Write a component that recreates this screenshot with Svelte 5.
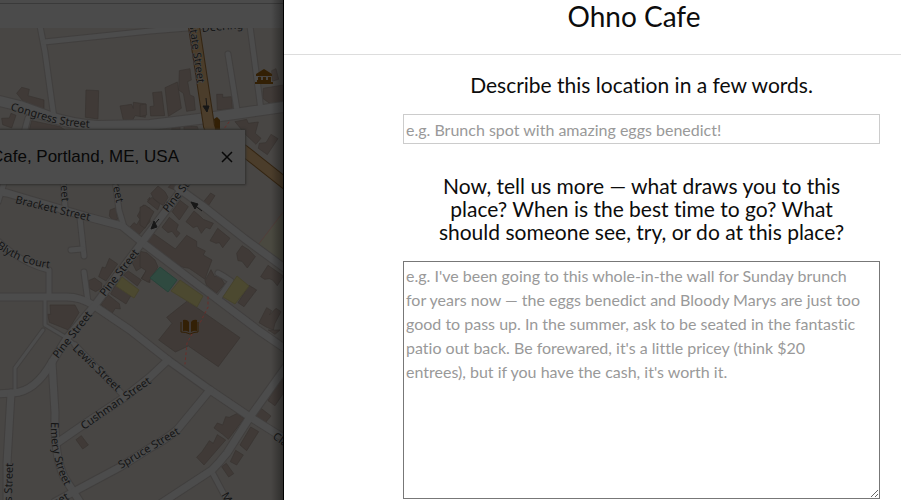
<script>
  let summary = $state('');
  let details = $state('');

  const land = [
    'M40 26L45 52L54 118', 'M44 42L150 31L200 27',
    'M228 54L237 110', 'M250 26L261 110',
    'M63 180L65 207', 'M115 180L119 210L124 227',
    'M80 218L84 256', 'M71 250L82 249', 'M84 272L88 302',
    'M-3 240Q22 264 49 270V297', 'M5 180L-2 202',
    'M75 345L123 395', 'M212 472L228 502',
    'M218 273Q224 276 231 281L218 299', 'M24 133L28 118'
  ];
  const lanes = ['M45 297V325L67 338L75 345', 'M43 330L15 368V393'];
  const streets = [
    'M-5 191L7 193L88 217L122 226L143 243L193 281L258 330L290 352',
    'M-5 297H67Q80 297 93 305L130 330L168 360L210 390L250 417L290 442',
    'M186 184L140 245L95 305L67 338L52 362Q35 392 13 393L-5 394',
    'M178 188L203 206L245 239L290 272',
    'M52 362L55 413Q54 455 64 477L80 502',
    'M11 393L7 463V502',
    'M57 443L83 425L125 397L150 377L168 360',
    'M55 502L77 490L120 467L150 448Q165 440 177 430L210 390',
    'M160 504L212 470Q219 463 227 453L250 417L288 364'
  ];
  const congress = 'M-5 100L20 106L50 117Q72 124 97 126L150 125L207 118L290 106';
  const stateStreet = 'M193 20L209 126Q211 133 222 137L243 150L290 187';

  // Building footprints, grouped by map tile; each tile is drawn at three units per pixel.
  const tiles = [
    { x: 0, y: 0, d: 'M50 280L65 262L88 268L84 287L132 300V332L72 307ZM258 270L296 272L294 357L256 352ZM360 318L395 313L400 325V307L438 312L436 352L405 347L398 360H370ZM5 355L28 354L33 340L48 346L35 384L8 374ZM95 362L180 380L195 390H88Z' },
    { x: 140, y: 0, d: 'M0 315L18 312L20 345L0 350ZM38 278L65 275L74 347L32 348L30 320L42 318ZM75 263L112 246L124 325L85 349ZM118 212L150 206L154 240L143 245L150 285L162 290L166 330L140 334L130 280L116 270ZM230 283H248V292L275 290L277 326L232 330ZM395 212L408 206L416 238L398 243ZM370 265L430 255V308L400 318L368 295ZM285 365L320 358L325 370L355 366L346 400L363 415L348 433L318 405ZM358 430L378 428L393 403L414 416L382 464L355 445ZM95 385L120 380V389H95ZM132 378L172 380L175 389H132Z' },
    { x: 0, y: 160, d: 'M330 150L348 143L353 178L338 180L328 168ZM385 207L402 188L410 194L420 178L412 168L430 135L450 145V185L417 224ZM443 119L450 112V130ZM150 435H225L237 458L205 510L148 487L143 463H152ZM265 362L284 354L306 370L304 385L287 395L268 385ZM296 350L307 321L316 324L328 295L353 312L318 363ZM370 345L385 333L424 360L412 378ZM348 372L392 408L378 432L332 402ZM325 405L358 431L361 447L346 445L337 459L302 434ZM395 305L425 280L447 293L450 305L409 333ZM424 355L450 315V368Z' },
    { x: 140, y: 160, d: 'M0 142L15 135L42 155L15 205L0 195ZM22 125L36 112L60 132L53 150ZM33 100L54 78L75 95L84 112L70 137L42 118ZM85 82L95 70H120L110 92ZM96 155L120 121L145 140L118 180ZM187 130L212 99L225 107L204 139ZM138 185L162 153L183 171L190 178L220 190L210 207L198 202L184 220L172 198L160 203ZM210 242L233 205L270 235L248 263L238 248L228 250ZM66 202L88 172L115 194L109 210L120 220L110 232L96 214L84 218ZM22 240L42 222L106 267L140 226L170 244V260L196 273L190 285L216 300L205 329L195 358L165 337L147 325L125 321L24 255ZM195 362L213 329L224 350L237 345L254 372L230 399L200 377ZM290 280L306 257L327 270L346 290L322 324L306 304L294 302ZM362 350L384 316L430 348L412 377L398 360L388 356L374 358ZM0 274L20 278L45 300L54 321L25 367L5 356L18 332L0 320ZM327 376L350 390L312 440L294 428ZM357 488L380 443L395 452L388 465L408 445L423 455L405 490L400 510L380 502ZM80 472L110 448L142 423L300 533L235 620L145 558L115 572L106 576L56 540L96 490Z' },
    { x: 0, y: 330, d: 'M228 329L244 317L265 345L248 357Z' },
    { x: 140, y: 330, d: 'M385 0H420L405 13ZM384 212L401 180L412 140L430 150V190L405 227ZM345 258L363 235L393 258L376 278ZM300 345L332 291L356 305L320 362ZM271 395L287 361L310 375L290 405ZM245 410L259 400L281 431L266 441ZM222 294L232 279L248 285L257 260L268 262L292 250L312 266L265 328L248 313ZM170 382L186 365L208 332L220 340L232 314L257 330L192 405Z' }
  ];
</script>

<main>
  <section class="map-pane" aria-label="Map">
    <header></header>
    <div class="map">
      <svg width="284" height="472" viewBox="0 28 284 472" aria-hidden="true">
        <defs>
          <path id="congress" d="M10 110Q30 116 47 121Q67 127 94 128" />
          <path id="brackett" d="M15 203Q45 211 94 222" />
          <path id="blyth" d="M-4 247Q19 265 54 269" />
          <path id="emery" d="M51 422Q49 459 69 494" />
        </defs>
        <path fill="#4a4940" stroke="#513f3b" d="M284 211L258 245L284 263Z" />
        <g fill="#403a37" stroke="#383431" stroke-width="2">
          {#each tiles as tile}
            <path transform="translate({tile.x} {tile.y}) scale(.3333)" d={tile.d} />
          {/each}
        </g>
        <g fill="none" stroke-linecap="round" stroke-linejoin="round">
          <g stroke="#413f3e">
            {#each lanes as d}<path {d} stroke-width="5" />{/each}
            {#each land as d}<path {d} stroke-width="7" />{/each}
            {#each streets as d}<path {d} stroke-width="9" />{/each}
            <path d={congress} stroke-width="12" />
          </g>
          <g stroke="#4c4c4c">
            {#each lanes as d}<path {d} stroke-width="3" />{/each}
            {#each land as d}<path {d} stroke-width="5" />{/each}
            {#each streets as d}<path {d} stroke-width="7" />{/each}
            <path d={congress} stroke-width="10" />
          </g>
          <path d={stateStreet} stroke="#342512" stroke-width="12" />
          <path d={stateStreet} stroke="#4b3d2b" stroke-width="10" />
          <path d="M208 297V307L199 325M192 334L187 343L185 364M229 122L221 133" stroke="#692f2b" stroke-dasharray="2 3" />
        </g>
        <path fill="#2f4a40" stroke="#28433a" d="M160 267L177 280L168 292L150 278Z" />
        <path fill="#4c4930" stroke="#46432d" d="M180 280L203 296L197 307L171 291ZM237 276L249 286L235 304L223 297ZM122 277L139 290L134 298L116 286Z" />

        <g fill="#332005">
          <path d="M256 74L264 69L272 74V76H256ZM258 77H261V81H258ZM263 77H266V81H263ZM268 77H271V81H268ZM257 80H271V82H257ZM255 82H273V84H255Z" />
          <path d="M214 119L217 117L220 120V130H215Z" />
          <path d="M183 320Q187 319 189 322V332Q186 330 183 331ZM191 322Q193 319 197 320V331Q194 330 191 332Z" />
          <path fill="none" stroke="#332005" d="M181 322V332Q186 332 190 334Q194 332 198 332V322" />
        </g>
        <g fill="#171717" stroke="#171717">
          <path d="M206 98L207 108M203 106L207 112L209 106ZM159 219L152 227M154 221L151 229L157 227ZM202 211L194 205M191 202L195 209L198 204Z" />
        </g>

        <g class="labels">
          <text><textPath href="#congress">Congress Street</textPath></text>
          <text><textPath href="#brackett">Brackett Street</textPath></text>
          <text><textPath href="#blyth">Blyth Court</textPath></text>
          <text><textPath href="#emery">Emery Street</textPath></text>
          <text transform="translate(202 32) rotate(-5)">Deering</text>
          <text transform="translate(189 24) rotate(82)">State Street</text>
          <text transform="translate(60 171) rotate(87)">Street</text>
          <text transform="translate(110 173) rotate(78)">Street</text>
          <text transform="translate(168 213) rotate(-52)">Pine Street</text>
          <text transform="translate(105 297) rotate(-52)">Pine Street</text>
          <text transform="translate(58 359) rotate(-52)">Pine Street</text>
          <text transform="translate(72 349) rotate(44)">Lewis Street</text>
          <text transform="translate(84 430) rotate(-35)">Cushman Street</text>
          <text transform="translate(121 469) rotate(-31)">Spruce Street</text>
          <text transform="translate(11 525) rotate(-88)">Lewis Street</text>
          <text transform="translate(43 514) rotate(-30)">Street</text>
          <text transform="translate(272 438) rotate(35)">Clark</text>
          <text transform="translate(221 495) rotate(60)">May</text>
        </g>
      </svg>
    </div>
    <div class="place">
      <span>Ohno Cafe, Portland, ME, USA</span>
      <button type="button" aria-label="Clear location">
        <svg width="12" height="12" viewBox="0 0 12 12"><path d="M1 1L11 11M11 1L1 11" stroke="#080808" stroke-width="1.5" /></svg>
      </button>
    </div>
  </section>

  <section class="panel">
    <h1>Ohno Cafe</h1>
    <form>
      <label for="summary">Describe this location in a few words.</label>
      <input id="summary" type="text" bind:value={summary} placeholder="e.g. Brunch spot with amazing eggs benedict!" />
      <label for="details" class="second">Now, tell us more — what draws you to this place? When is the best time to go? What should someone see, try, or do at this place?</label>
      <textarea id="details" bind:value={details} placeholder="e.g. I've been going to this whole-in-the wall for Sunday brunch for years now — the eggs benedict and Bloody Marys are just too good to pass up. In the summer, ask to be seated in the fantastic patio out back. Be forewared, it's a little pricey (think $20 entrees), but if you have the cash, it's worth it."></textarea>
    </form>
  </section>
</main>

<style>
  :global(body) { margin: 0; }
  main {
    display: grid;
    grid-template-columns: 284px minmax(0, 1fr);
    height: 100vh;
    overflow: hidden;
    font-family: Lato, sans-serif;
    font-variant-ligatures: none;
    color: #0c0c0c;
  }
  .map-pane {
    position: relative;
    display: flex;
    flex-direction: column;
    overflow: hidden;
    background: #484644;
  }
  .map-pane::after {
    content: '';
    position: absolute;
    inset: 0 0 0 auto;
    width: 12px;
    border-right: 1px solid #000;
    background: linear-gradient(to right, transparent, rgb(0 0 0 / 35%));
  }
  header {
    flex: none;
    box-sizing: border-box;
    height: 28px;
    background: linear-gradient(#4b4b4b 3px, #3a3a3a 3px, #3a3a3a 4px, #4b4b4b 4px);
  }
  .map svg { display: block; }
  .labels {
    font: 11px 'Noto Sans', sans-serif;
    fill: #141414;
    stroke: #4b4b4b;
    stroke-width: 1px;
    paint-order: stroke;
  }
  .place {
    position: absolute;
    top: 130px;
    left: 0;
    display: flex;
    align-items: center;
    justify-content: flex-end;
    gap: 42px;
    box-sizing: border-box;
    width: 245px;
    height: 54px;
    padding-right: 12px;
    background: #4c4c4c;
    box-shadow: 0 0 2px 1px #302f2e;
    font: 17px 'Liberation Sans', Arial, sans-serif;
    color: #080808;
    white-space: nowrap;
  }
  .place button {
    display: flex;
    padding: 0;
    border: 0;
    background: none;
  }
  .panel { background: #fff; }
  h1 {
    margin: 0;
    padding: 0 0 21px 83px;
    border-bottom: 1px solid #ddd;
    font-size: 28px;
    font-weight: 400;
    line-height: 33px;
    text-align: center;
  }
  form {
    display: flex;
    flex-direction: column;
    padding: 18px 21px 0 119px;
  }
  label {
    padding: 0 32px;
    font-size: 21px;
    line-height: 23px;
    text-align: center;
  }
  .second { margin-top: 30px; }
  input, textarea {
    box-sizing: border-box;
    width: 100%;
    margin: 18px 0 0;
    border: 1px solid #ccc;
    border-radius: 0;
    padding: 2px;
    font: 16px/24px Lato, sans-serif;
    font-variant-ligatures: none;
    color: #111;
    outline: 0;
  }
  input { height: 30px; }
  textarea {
    height: 238px;
    padding-right: 12px;
    border-color: #777;
    resize: both;
  }
  ::placeholder { color: #999; opacity: 1; }
</style>
